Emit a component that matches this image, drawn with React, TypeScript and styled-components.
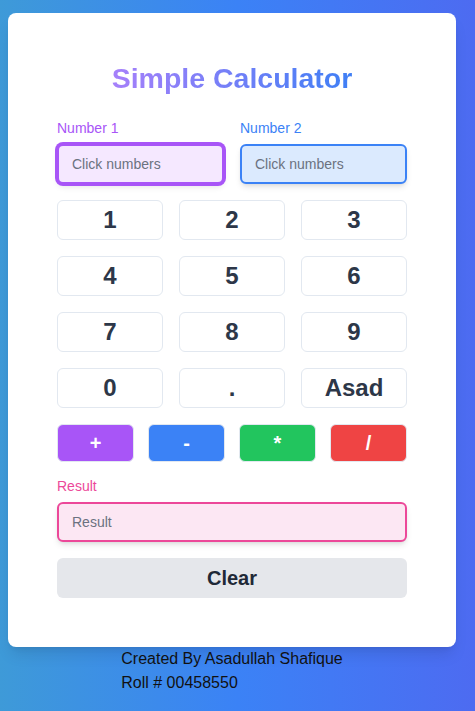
import React, { useState } from "react";
import styled, { createGlobalStyle } from "styled-components";

const Global = createGlobalStyle`
  html, body { margin: 0; padding: 0; }
  body {
    min-height: 711px;
    background: linear-gradient(90deg, #3e9ad8 0%, #3b82f6 50%, #4d6bf1 100%);
    font-family: "Liberation Sans", Arial, sans-serif;
  }
  * { box-sizing: border-box; }
`;

const Page = styled.div`
  display: flex;
  flex-direction: column;
  align-items: flex-start;
  padding: 13px 0 0 8px;
`;

const Card = styled.div`
  width: 448px;
  background: #ffffff;
  border-radius: 8px;
  padding: 48px 49px 49px 49px;
  box-shadow: 0 10px 15px -3px rgba(0,0,0,0.1), 0 4px 6px -4px rgba(0,0,0,0.1);
`;

const Title = styled.h1`
  margin: 0 0 22px;
  text-align: center;
  font-size: 28.5px;
  line-height: 35px;
  font-weight: 700;
`;

const TitleText = styled.span`
  background: linear-gradient(90deg, #a680fa, #3f7ff5);
  -webkit-background-clip: text;
  background-clip: text;
  color: transparent;
`;

const InputRow = styled.div`
  display: grid;
  grid-template-columns: 1fr 1fr;
  column-gap: 16px;
`;

const Field = styled.div`
  display: flex;
  flex-direction: column;
`;

const Label = styled.label<{ $color: string }>`
  color: ${(p) => p.$color};
  font-size: 14px;
  line-height: 20px;
  margin-bottom: 6px;
`;

const Input = styled.input<{ $border: string; $bg: string; $ring?: boolean }>`
  height: 40px;
  width: 100%;
  border: 2px solid ${(p) => p.$border};
  background: ${(p) => p.$bg};
  border-radius: 6px;
  padding: 0 13px;
  font-family: "Liberation Sans", Arial, sans-serif;
  font-size: 14px;
  color: #1f2937;
  outline: none;
  box-shadow: ${(p) =>
    p.$ring
      ? `0 0 0 2px ${p.$border}, 0 4px 6px -1px rgba(0,0,0,0.1)`
      : "0 4px 6px -1px rgba(0,0,0,0.1), 0 2px 4px -2px rgba(0,0,0,0.1)"};
  &::placeholder { color: #6b7280; }
`;

const NumGrid = styled.div`
  display: grid;
  grid-template-columns: repeat(3, 1fr);
  gap: 16px;
  margin-top: 16px;
`;

const NumButton = styled.button`
  height: 40px;
  background: #ffffff;
  border: 1px solid #e2e8f0;
  border-radius: 6px;
  font-family: "Liberation Sans", Arial, sans-serif;
  font-size: 24px;
  font-weight: 700;
  color: #2d3748;
  padding: 0;
  cursor: pointer;
`;

const OpGrid = styled.div`
  display: grid;
  grid-template-columns: repeat(4, 1fr);
  gap: 14px;
  margin-top: 16px;
`;

const OpButton = styled.button<{ $bg: string }>`
  height: 38px;
  background: ${(p) => p.$bg};
  border: 1px solid #e2e8f0;
  border-radius: 6px;
  color: #ffffff;
  font-family: "Liberation Sans", Arial, sans-serif;
  font-size: 20px;
  font-weight: 700;
  padding: 0;
  cursor: pointer;
`;

const ResultField = styled(Field)`
  margin-top: 14px;
`;

const ClearButton = styled.button`
  margin-top: 16px;
  width: 100%;
  height: 40px;
  background: #e5e7eb;
  border: none;
  border-radius: 6px;
  font-family: "Liberation Sans", Arial, sans-serif;
  font-size: 20px;
  font-weight: 700;
  color: #1f2937;
  cursor: pointer;
`;

const Footer = styled.div`
  width: 448px;
  display: flex;
  justify-content: center;
`;

const FooterText = styled.div`
  font-size: 16px;
  line-height: 24px;
  color: #111111;
`;

export default function App() {
  const [a, setA] = useState("");
  const [b, setB] = useState("");
  const [res, setRes] = useState("");
  const keys = ["1", "2", "3", "4", "5", "6", "7", "8", "9", "0", ".", "Asad"];
  const ops = [
    { s: "+", c: "#a855f7" },
    { s: "-", c: "#3b82f6" },
    { s: "*", c: "#22c55e" },
    { s: "/", c: "#ef4444" },
  ];
  const calc = (op: string) => {
    const x = parseFloat(a);
    const y = parseFloat(b);
    if (isNaN(x) || isNaN(y)) return;
    let r = 0;
    if (op === "+") r = x + y;
    if (op === "-") r = x - y;
    if (op === "*") r = x * y;
    if (op === "/") r = x / y;
    setRes(String(r));
  };
  return (
    <>
      <Global />
      <Page>
        <Card>
          <Title>
            <TitleText>Simple Calculator</TitleText>
          </Title>
          <InputRow>
            <Field>
              <Label $color="#a855f7">Number 1</Label>
              <Input
                $border="#a855f7"
                $bg="#f5e8ff"
                $ring
                placeholder="Click numbers"
                value={a}
                onChange={(e) => setA(e.target.value)}
              />
            </Field>
            <Field>
              <Label $color="#3b82f6">Number 2</Label>
              <Input
                $border="#3b82f6"
                $bg="#dbeafe"
                placeholder="Click numbers"
                value={b}
                onChange={(e) => setB(e.target.value)}
              />
            </Field>
          </InputRow>
          <NumGrid>
            {keys.map((k) => (
              <NumButton key={k} onClick={() => k !== "Asad" && setA(a + k)}>
                {k}
              </NumButton>
            ))}
          </NumGrid>
          <OpGrid>
            {ops.map((o) => (
              <OpButton key={o.s} $bg={o.c} onClick={() => calc(o.s)}>
                {o.s}
              </OpButton>
            ))}
          </OpGrid>
          <ResultField>
            <Label $color="#ec4899">Result</Label>
            <Input $border="#ec4899" $bg="#fce7f3" placeholder="Result" value={res} readOnly />
          </ResultField>
          <ClearButton onClick={() => { setA(""); setB(""); setRes(""); }}>Clear</ClearButton>
        </Card>
        <Footer>
          <FooterText>
            Created By Asadullah Shafique
            <br />
            Roll # 00458550
          </FooterText>
        </Footer>
      </Page>
    </>
  );
}
